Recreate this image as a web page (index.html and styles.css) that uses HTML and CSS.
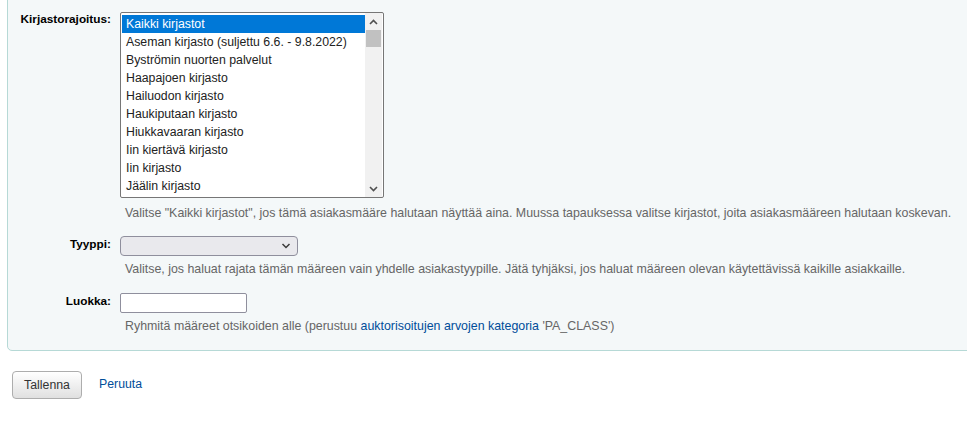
FILE: index.html
```html
<!DOCTYPE html>
<html lang="fi">
<head>
<meta charset="utf-8">
<title>Asiakasmääre</title>
<link rel="stylesheet" href="styles.css">
</head>
<body>
<form class="page">
  <fieldset class="rows">
    <ol class="field-list">
      <li class="field">
        <label class="field-label field-label-top">Kirjastorajoitus:</label>
        <div class="field-body">
          <div class="listbox">
            <ul class="listbox-items">
              <li class="option selected">Kaikki kirjastot</li>
              <li class="option">Aseman kirjasto (suljettu 6.6. - 9.8.2022)</li>
              <li class="option">Byströmin nuorten palvelut</li>
              <li class="option">Haapajoen kirjasto</li>
              <li class="option">Hailuodon kirjasto</li>
              <li class="option">Haukiputaan kirjasto</li>
              <li class="option">Hiukkavaaran kirjasto</li>
              <li class="option">Iin kiertävä kirjasto</li>
              <li class="option">Iin kirjasto</li>
              <li class="option">Jäälin kirjasto</li>
            </ul>
            <div class="scrollbar">
              <span class="sb-btn">
                <svg width="9" height="6" viewBox="0 0 9 6"><path d="M1 5 L4.5 1.5 L8 5" fill="none" stroke="#505050" stroke-width="1.6"/></svg>
              </span>
              <span class="sb-thumb"></span>
              <span class="sb-track"></span>
              <span class="sb-btn">
                <svg width="9" height="6" viewBox="0 0 9 6"><path d="M1 1 L4.5 4.5 L8 1" fill="none" stroke="#505050" stroke-width="1.6"/></svg>
              </span>
            </div>
          </div>
          <div class="hint">Valitse "Kaikki kirjastot", jos tämä asiakasmääre halutaan näyttää aina. Muussa tapauksessa valitse kirjastot, joita asiakasmääreen halutaan koskevan.</div>
        </div>
      </li>
      <li class="field">
        <label class="field-label">Tyyppi:</label>
        <div class="field-body">
          <div class="select">
            <svg width="10" height="6" viewBox="0 0 10 6"><path d="M1.5 1 L5 4.5 L8.5 1" fill="none" stroke="#3b3b3b" stroke-width="1.5"/></svg>
          </div>
          <div class="hint hint-tight">Valitse, jos haluat rajata tämän määreen vain yhdelle asiakastyypille. Jätä tyhjäksi, jos haluat määreen olevan käytettävissä kaikille asiakkaille.</div>
        </div>
      </li>
      <li class="field field-last">
        <label class="field-label">Luokka:</label>
        <div class="field-body">
          <input class="text-input" type="text">
          <div class="hint hint-tight">Ryhmitä määreet otsikoiden alle (perustuu <a class="link" href="#">auktorisoitujen arvojen kategoria</a> 'PA_CLASS')</div>
        </div>
      </li>
    </ol>
  </fieldset>
  <div class="actions">
    <button class="btn" type="button">Tallenna</button>
    <a class="link cancel" href="#">Peruuta</a>
  </div>
</form>
</body>
</html>
```

FILE: styles.css
```css
html, body {
  margin: 0;
  padding: 0;
  background: #ffffff;
  overflow: hidden;
}
body {
  font-family: "Liberation Sans", Arial, sans-serif;
  font-size: 12.3px;
  color: #000;
}
.page {
  margin: 0;
}
.rows {
  margin: -10px -20px 0 7px;
  padding: 21px 0 16px 0;
  border: 1px solid #b6d9d6;
  border-radius: 0 0 0 5px;
  background: #f4f8f9;
  min-width: 0;
}
.field-list {
  list-style: none;
  margin: 0;
  padding: 0;
  display: flex;
  flex-direction: column;
  gap: 15px;
}
.field {
  display: flex;
  align-items: flex-start;
}
.field-last {
  margin-top: 1px;
}
.field-label {
  width: 103px;
  flex: none;
  text-align: right;
  font-weight: bold;
  font-size: 11.8px;
  padding-right: 9px;
  padding-top: 1px;
  line-height: 15px;
}
.field-label-top {
  padding-top: 0;
}
.field-body {
  display: flex;
  flex-direction: column;
  align-items: flex-start;
}
.listbox {
  display: flex;
  border: 1px solid #767676;
  border-radius: 2px;
  background: #fff;
  box-sizing: border-box;
  width: 264px;
  height: 186px;
  padding: 2px 1px 0 1px;
}
.listbox-items {
  list-style: none;
  margin: 0;
  padding: 0;
  flex: 1;
}
.option {
  height: 18px;
  line-height: 18px;
  padding-left: 4px;
  white-space: nowrap;
  color: #222;
}
.option.selected {
  background: #0078d7;
  color: #fff;
}
.scrollbar {
  width: 17px;
  margin: -2px 0 0 0;
  background: #f1f1f1;
  display: flex;
  flex-direction: column;
}
.sb-btn {
  height: 17px;
  display: flex;
  align-items: center;
  justify-content: center;
  flex: none;
}
.sb-thumb {
  height: 17px;
  margin: 0 1px;
  background: #c1c1c1;
  flex: none;
}
.sb-track {
  flex: 1;
}
.hint {
  color: #666;
  font-size: 12.4px;
  margin: 7px 0 0 5px;
  line-height: 16px;
  white-space: nowrap;
}
.hint-tight {
  margin-top: 5px;
}
.select {
  width: 178px;
  height: 20px;
  box-sizing: border-box;
  border: 1px solid #8f8f9d;
  border-radius: 4px;
  background: #e9e9ed;
  display: flex;
  align-items: center;
  justify-content: flex-end;
  padding-right: 6px;
}
.text-input {
  display: block;
  width: 127px;
  height: 20px;
  box-sizing: border-box;
  margin: 0;
  border: 1px solid #8f8f9d;
  border-radius: 2px;
  background: #fff;
  font: inherit;
}
.link {
  color: #004d99;
  text-decoration: none;
}
.actions {
  display: flex;
  align-items: center;
  gap: 17px;
  padding: 20px 0 0 12px;
}
.btn {
  font-family: inherit;
  font-size: 12.3px;
  color: #333;
  height: 28px;
  width: 70px;
  padding: 0;
  border: 1px solid #adadad;
  border-radius: 4px;
  background: linear-gradient(#ffffff, #e0e0e0);
}
.cancel {
  margin-top: -3px;
}
```
